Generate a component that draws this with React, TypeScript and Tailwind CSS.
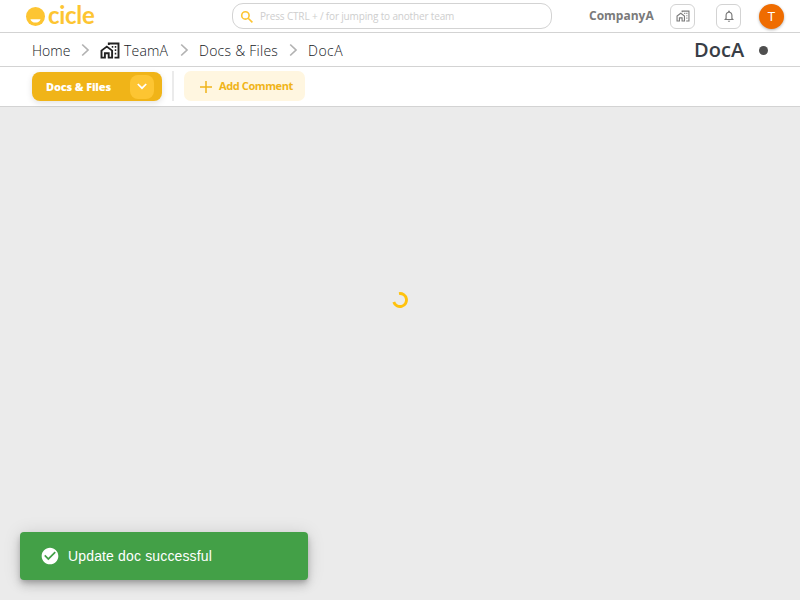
import React from "react";
import { MdOutlineNotifications, MdCheckCircle } from "react-icons/md";

function HomeWork({ className, weight }: { className: string; weight: number }) {
  return (
    <svg className={className} viewBox="0 0 20 17" fill="none" stroke="currentColor" strokeWidth={weight}>
      <path d="M1.5 15.6V8.6L6.8 4.6l5.3 4v7H8.7v-4.4H4.9v4.4H1.5Z" />
      <path d="M8.8 3V1.5h9.7v14.1h-4" />
      <path d="M15.5 4v1.7m0 1.6V9m0 1.7v1.7M12.5 4v1.7" strokeWidth="1.5" />
    </svg>
  );
}

function Chevron() {
  return (
    <svg className="mt-px h-[14px] w-[9px] shrink-0" viewBox="0 0 9 14" fill="none" stroke="#b2b2b2" strokeWidth="1.7">
      <path d="M1.2 1.5 7 7l-5.8 5.5" />
    </svg>
  );
}

function Logo() {
  return (
    <div className="ml-[26px] flex h-8 w-[206px] items-center text-[#fdc532]">
      <svg className="h-[19px] w-[19px] shrink-0" viewBox="0 0 19 19">
        <circle cx="9.5" cy="9.5" r="9.5" fill="#fdc532" />
        <path d="M4.4 12.2h10.2c-.7 2.1-2.7 3.4-5.1 3.4s-4.4-1.3-5.1-3.4Z" fill="#fff" />
      </svg>
      <span className="mb-[2px] ml-[3px] whitespace-nowrap font-['Lato','Open_Sans',sans-serif] text-[24px] leading-8 font-bold tracking-[-0.3px]">cicle</span>
    </div>
  );
}

function Header() {
  return (
    <header className="flex h-[33px] shrink-0 border-b border-[#d3d3d3] bg-white">
      <Logo />
      <div className="mt-[3px] flex h-[26px] w-[320px] items-center rounded-[11px] border border-[#d3d3d3] pl-[6px]">
        <svg className="mt-px h-4 w-4 shrink-0" viewBox="0 0 16 16" fill="none" stroke="#fdc532" strokeWidth="1.6">
          <circle cx="6.4" cy="6.4" r="3.7" />
          <path d="m9.2 9.2 4.2 4.2" />
        </svg>
        <span className="ml-[5px] whitespace-nowrap text-[10px] tracking-[-0.16px] text-[#cecece]">Press CTRL + / for jumping to another team</span>
      </div>
      <div className="ml-[37px] w-[81px] whitespace-nowrap text-[12px] leading-8 font-bold text-[#7a7a7a]">CompanyA</div>
      <div className="mt-1 flex h-[25px] w-[25px] items-center justify-center rounded-[6px] border border-[#d3d3d3]">
        <HomeWork weight={1.6} className="mb-px h-3 w-[14px] text-[#7a7a7a]" />
      </div>
      <div className="mt-1 ml-[21px] flex h-[25px] w-[25px] items-center justify-center rounded-[6px] border border-[#d3d3d3]">
        <MdOutlineNotifications className="mb-px h-[14px] w-[14px] text-[#7a7a7a]" />
      </div>
      <div className="mt-1 ml-[18px] flex h-[25px] w-[25px] items-center justify-center rounded-full bg-[#ef6c00] font-['Roboto',sans-serif] text-[13px] text-white shadow-[0_1px_3px_rgba(0,0,0,0.3)]">T</div>
    </header>
  );
}

function Breadcrumbs() {
  return (
    <nav className="flex h-[34px] shrink-0 items-center border-b border-[#d3d3d3] bg-white pl-8 text-[14px] leading-8 font-light whitespace-nowrap text-[#14171c]">
      <span className="mt-[2px] w-[49px]">Home</span>
      <Chevron />
      <HomeWork weight={1.9} className="mt-[2px] ml-[10px] h-[17px] w-5 shrink-0 text-[#222]" />
      <span className="mt-[2px] ml-1 w-[56px] tracking-[0.2px]">TeamA</span>
      <Chevron />
      <span className="mt-[2px] ml-[10px] w-[90px] tracking-[0.25px]">Docs &amp; Files</span>
      <Chevron />
      <span className="mt-[2px] ml-[10px] tracking-[0.5px]">DocA</span>
      <span className="ml-auto w-[65px] text-[20px] font-semibold tracking-[0.1px] text-[#393e46]">DocA</span>
      <span className="mt-[2px] mr-8 h-[9px] w-[9px] rounded-full bg-[#4f4f4f]" />
    </nav>
  );
}

function Toolbar() {
  return (
    <div className="flex h-10 shrink-0 border-b border-[#d3d3d3] bg-white pl-8 text-[11px]">
      <button className="mt-[5px] flex h-[29px] w-[130px] items-center rounded-[8px] bg-[#f0b418] pl-[14px] font-extrabold text-white shadow-[0_2px_6px_rgba(0,0,0,0.12)]">
        <span className="mt-px w-[84px] text-left whitespace-nowrap tracking-[-0.15px]">Docs &amp; Files</span>
        <span className="flex h-6 w-6 items-center justify-center rounded-[8px] bg-[#fdc532]">
          <svg className="h-[7px] w-[10px]" viewBox="0 0 10 7" fill="none" stroke="#fff" strokeWidth="1.7"><path d="m.8 1 4.2 4.2L9.2 1" /></svg>
        </span>
      </button>
      <span className="mt-1 ml-[10px] h-[30px] w-[2px] bg-[#ebebeb]" />
      <button className="mt-1 ml-[10px] flex h-[30px] w-[121px] items-center rounded-[7px] bg-[#fff6e0] pl-4 font-bold text-[#f0b418]">
        <svg className="mt-px h-3 w-3" viewBox="0 0 12 12" stroke="#f0b418" strokeWidth="1.5"><path d="M6 0v12M0 6h12" /></svg>
        <span className="ml-[7px] whitespace-nowrap tracking-[-0.4px]">Add Comment</span>
      </button>
    </div>
  );
}

export default function App() {
  return (
    <div className="relative flex h-[600px] w-[800px] flex-col overflow-hidden bg-[#ebebeb] font-['Open_Sans','Noto_Sans',sans-serif]">
      <Header />
      <Breadcrumbs />
      <Toolbar />
      <main className="flex-1" />
      <svg className="absolute top-[292px] left-[392px] h-4 w-4" viewBox="0 0 16 16" fill="none">
        <path d="M7 1.6A6.5 6.5 0 1 1 1.8 10" stroke="#ffc20e" strokeWidth="2.9" />
      </svg>
      <div className="absolute bottom-5 left-5 flex h-12 w-[288px] items-center rounded-[4px] bg-[#43a047] pl-5 text-white shadow-[0_3px_5px_-1px_rgba(0,0,0,0.2),0_6px_10px_rgba(0,0,0,0.14),0_1px_18px_rgba(0,0,0,0.12)]">
        <MdCheckCircle className="h-5 w-5" />
        <span className="ml-2 whitespace-nowrap font-['Liberation_Sans',sans-serif] text-[14px] tracking-[0.15px]">Update doc successful</span>
      </div>
    </div>
  );
}
